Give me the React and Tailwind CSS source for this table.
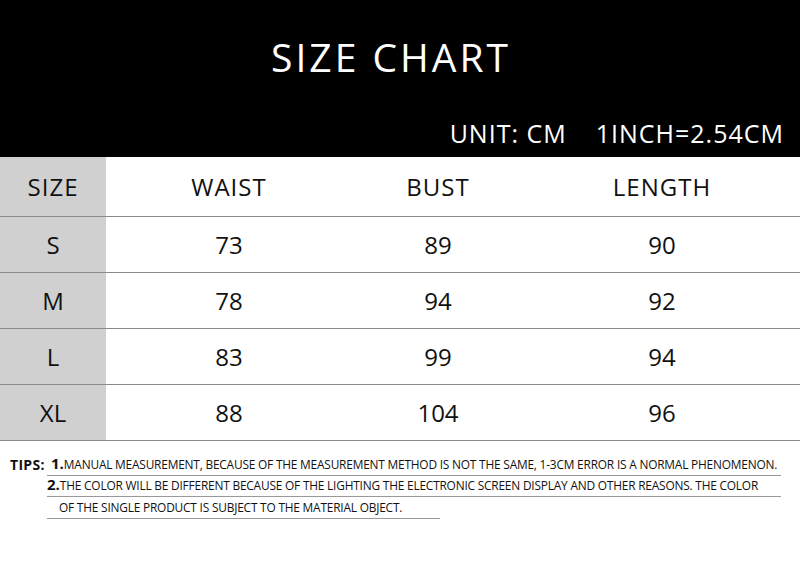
export default function App() {
  const rows = [
    ["S", "73", "89", "90"],
    ["M", "78", "94", "92"],
    ["L", "83", "99", "94"],
    ["XL", "88", "104", "96"],
  ];
  const font = { fontFamily: '"Open Sans", "Liberation Sans", sans-serif' };
  return (
    <div className="w-[800px] h-[564px] bg-white overflow-hidden" style={font}>
      <div className="bg-black h-[157px] flex flex-col text-white">
        <div className="h-[114px] flex items-center justify-center pb-[2px] pr-[18px]">
          <span className="text-[39px] tracking-[3px] leading-none">SIZE CHART</span>
        </div>
        <div className="flex justify-end pr-[16px] pt-[7px] text-[25px] tracking-[1px] leading-none gap-[29px]">
          <span>UNIT: CM</span>
          <span>1INCH=2.54CM</span>
        </div>
      </div>
      <div className="grid grid-cols-[106px_246px_172px_1fr] text-[24px] text-[#111] leading-none">
        <div className="bg-[#d0d0d0] h-[60px] flex items-center justify-center border-b-[1.5px] border-[#8a8a8a] tracking-[1px]">SIZE</div>
        <div className="h-[60px] flex items-center justify-center border-b-[1.5px] border-[#8a8a8a] tracking-[1px]">WAIST</div>
        <div className="h-[60px] flex items-center justify-center border-b-[1.5px] border-[#8a8a8a] tracking-[1px]">BUST</div>
        <div className="h-[60px] flex items-center justify-center border-b-[1.5px] border-[#8a8a8a] tracking-[1px]">LENGTH</div>
        {rows.map((r) =>
          r.map((c, i) => (
            <div
              key={r[0] + i}
              className={
                "h-[56px] flex items-center justify-center border-b-[1.5px] border-[#8a8a8a] " +
                (i === 0 ? "bg-[#d0d0d0]" : "")
              }
            >
              {c}
            </div>
          ))
        )}
      </div>
      <div className="pt-[16px] text-[#111] leading-none whitespace-nowrap">
        <div className="flex items-end h-[19px]">
          <span className="w-[47px] shrink-0 pl-[10px] font-bold text-[14px] tracking-[0.3px] pb-[4px]">TIPS:</span>
          <div className="w-[734px] shrink-0 h-[19px] border-b border-[#999] pb-[4px] flex items-end">
            <span className="font-bold text-[15px] pl-[4px]">1.</span>
            <span className="text-[11.9px] tracking-[-0.2px]">MANUAL MEASUREMENT, BECAUSE OF THE MEASUREMENT METHOD IS NOT THE SAME, 1-3CM ERROR IS A NORMAL PHENOMENON.</span>
          </div>
        </div>
        <div className="ml-[47px] w-[734px] h-[21px] border-b border-[#999] pb-[4px] flex items-end">
          <span className="font-bold text-[15px]">2.</span>
          <span className="text-[11.9px] tracking-[-0.2px]">THE COLOR WILL BE DIFFERENT BECAUSE OF THE LIGHTING THE ELECTRONIC SCREEN DISPLAY AND OTHER REASONS. THE COLOR</span>
        </div>
        <div className="ml-[47px] w-[393px] h-[22px] border-b border-[#999] pb-[4px] pl-[12px] flex items-end">
          <span className="text-[11.9px] tracking-[-0.2px]">OF THE SINGLE PRODUCT IS SUBJECT TO THE MATERIAL OBJECT.</span>
        </div>
      </div>
    </div>
  );
}
